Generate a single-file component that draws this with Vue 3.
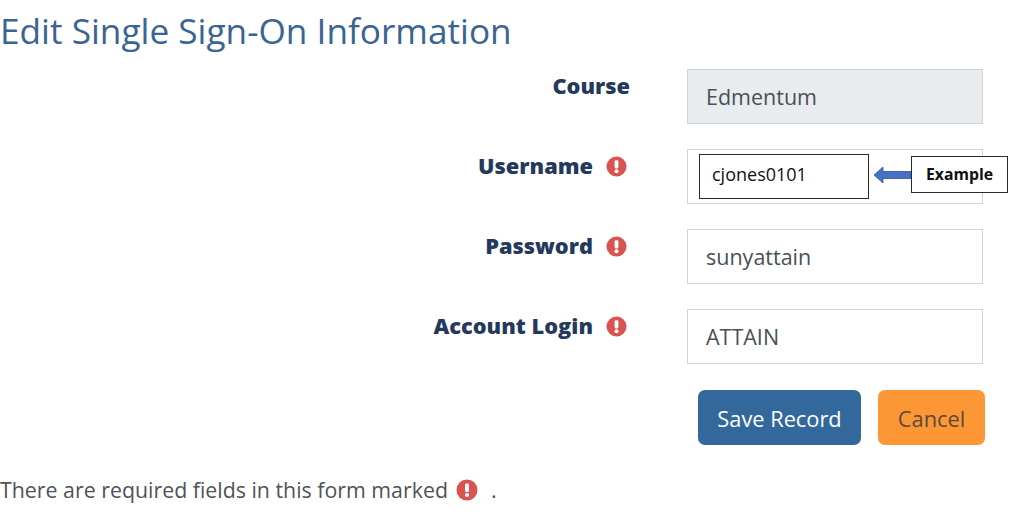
<template>
  <div class="page">
    <h1 class="title">Edit Single Sign-On Information</h1>

    <form class="form" @submit.prevent>
      <div v-for="field in fields" :key="field.label" class="row">
        <div class="label-cell">
          <span class="label">{{ field.label }}</span>
          <svg v-if="field.required" class="req" viewBox="0 0 22 22">
            <circle cx="11" cy="11" r="10.5" fill="#d9534f" />
            <rect x="9" y="4.5" width="4" height="8.5" rx="1.2" fill="#fff" />
            <circle cx="11" cy="16" r="2.1" fill="#fff" />
          </svg>
        </div>
        <div class="input-cell">
          <div class="input" :class="{ 'input-disabled': field.disabled }">{{ field.value }}</div>
          <div v-if="field.example" class="callout">
            <div class="callout-value">{{ field.example }}</div>
            <svg class="callout-arrow" viewBox="0 0 38 20">
              <path d="M1 10 L10 2 L10 6.5 L38 6.5 L38 13.5 L10 13.5 L10 18 Z" fill="#4472c4" stroke="#2f5597" stroke-width="0.8" />
            </svg>
            <div class="callout-tag">Example</div>
          </div>
        </div>
      </div>

      <div class="actions">
        <button type="button" class="btn btn-save">Save Record</button>
        <button type="button" class="btn btn-cancel">Cancel</button>
      </div>
    </form>

    <p class="note">
      There are required fields in this form marked
      <svg class="req req-note" viewBox="0 0 22 22">
        <circle cx="11" cy="11" r="10.5" fill="#d9534f" />
        <rect x="9" y="4.5" width="4" height="8.5" rx="1.2" fill="#fff" />
        <circle cx="11" cy="16" r="2.1" fill="#fff" />
      </svg>
      <span class="dot">.</span>
    </p>
  </div>
</template>

<script setup>
const fields = [
  { label: 'Course', value: 'Edmentum', disabled: true },
  { label: 'Username', value: '', required: true, example: 'cjones0101' },
  { label: 'Password', value: 'sunyattain', required: true },
  { label: 'Account Login', value: 'ATTAIN', required: true }
]
</script>

<style>
html,
body {
  margin: 0;
  background: #fff;
}
</style>

<style scoped>
.page {
  width: 1024px;
  height: 517px;
  overflow: hidden;
  font-family: "Open Sans", "Noto Sans", sans-serif;
  color: #495057;
}

.title {
  margin: 0;
  padding-top: 8px;
  height: 69px;
  box-sizing: border-box;
  font-size: 35.2px;
  line-height: 44px;
  font-weight: 400;
  color: #3a6491;
}

.form {
  display: flex;
  flex-direction: column;
  gap: 25px;
}

.row {
  display: grid;
  grid-template-columns: 630px 296px;
  column-gap: 57px;
  height: 55px;
}

.label-cell {
  display: flex;
  justify-content: flex-end;
  align-items: flex-start;
  gap: 13px;
  padding-top: 3px;
  height: 30px;
}

.label {
  font-size: 21.8px;
  line-height: 28px;
  font-weight: 800;
  color: #24395c;
}

.req {
  width: 21px;
  height: 21px;
  margin: 4px 3px 0 0;
  flex: none;
}

.input-cell {
  position: relative;
}

.input {
  box-sizing: border-box;
  height: 55px;
  padding: 0 18px;
  border: 1px solid #ced4da;
  background: #fff;
  font-size: 21.5px;
  line-height: 53px;
  color: #495057;
}

.input-disabled {
  background: #e9ecef;
}

.callout {
  position: absolute;
  left: 12px;
  top: 5px;
  display: flex;
  align-items: center;
}

.callout-value {
  box-sizing: border-box;
  width: 170px;
  height: 45px;
  padding-left: 12px;
  border: 1px solid #2b2b2b;
  background: #fff;
  font-size: 18px;
  line-height: 39px;
  color: #111;
}

.callout-arrow {
  width: 38px;
  height: 20px;
  margin: -4px 0 0 4px;
}

.callout-tag {
  box-sizing: border-box;
  width: 97px;
  height: 37px;
  margin-top: -4px;
  border: 1px solid #2b2b2b;
  background: #fff;
  font-size: 15.8px;
  font-weight: 700;
  line-height: 34px;
  text-align: center;
  color: #111;
}

.actions {
  display: flex;
  gap: 17px;
  margin-top: 1px;
  padding-left: 698px;
}

.btn {
  height: 55px;
  border: none;
  border-radius: 7px;
  padding: 1px 0 0;
  font-family: inherit;
  font-size: 21.8px;
}

.btn-save {
  width: 163px;
  background: #33689c;
  color: #fff;
}

.btn-cancel {
  width: 107px;
  background: #fd9735;
  color: #5a4a3a;
}

.note {
  display: flex;
  align-items: center;
  margin: 27px 0 0;
  height: 36px;
  font-size: 21.35px;
  line-height: 36px;
  color: #4f5357;
  white-space: nowrap;
}

.req-note {
  margin: 0 0 0 8px;
  width: 22px;
  height: 22px;
}

.dot {
  margin-left: 13px;
}
</style>
